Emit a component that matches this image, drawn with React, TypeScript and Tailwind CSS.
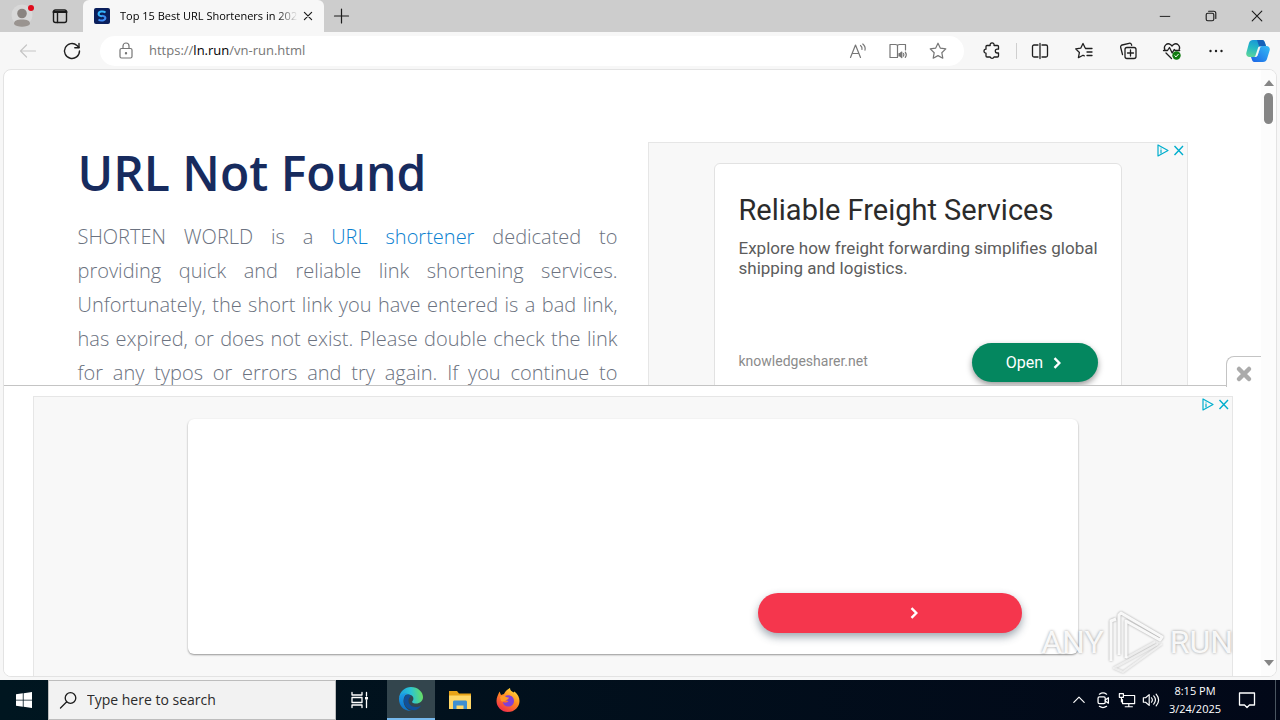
import type { ReactNode } from "react";

type IconProps = { children: ReactNode; size?: string; sw?: number };

function Icon({ children, size = "size-5", sw = 1.2 }: IconProps) {
  return (
    <svg
      viewBox="0 0 20 20"
      className={`${size} shrink-0`}
      fill="none"
      stroke="currentColor"
      strokeWidth={sw}
      strokeLinecap="round"
      strokeLinejoin="round"
      aria-hidden="true"
    >
      {children}
    </svg>
  );
}

function ToolButton({ label, children, width = "w-11" }: { label: string; children: ReactNode; width?: string }) {
  return (
    <button type="button" aria-label={label} className={`flex h-8 shrink-0 items-center justify-center ${width}`}>
      {children}
    </button>
  );
}

function TabStrip() {
  return (
    <header className="flex h-8 shrink-0 items-stretch bg-[#cdcdcd] text-[#1b1b1b]">
      <div className="flex w-[83px] shrink-0 items-center">
        <button type="button" aria-label="Profile" className="flex w-11 items-center justify-center">
          <svg viewBox="0 0 24 28" className="h-7 w-6" aria-hidden="true">
            <circle cx="12" cy="13" r="10.5" fill="#d8d8d8" />
            <circle cx="12" cy="11.5" r="4.8" fill="#8a8480" />
            <path d="M4 22c0-3.500 3-4.500 8-4.500s8 1 8 4.500c-2 3.500-14 3.500-16 0z" fill="#9a9490" />
            <circle cx="21" cy="6" r="3" fill="#e00b1c" />
          </svg>
        </button>
        <button type="button" aria-label="Tab actions" className="flex w-8 items-center justify-center">
          <Icon sw={1.4}>
            <rect x="3.5" y="4" width="13" height="12.5" rx="2" />
            <path d="M3.5 6h13" strokeWidth="2" />
            <path d="M7.5 6.5v10" />
          </Icon>
        </button>
      </div>
      <div className="flex w-[241px] shrink-0 items-center rounded-t-md bg-[#f7f7f7] pl-[11px] pr-1.5">
        <svg viewBox="0 0 16 16" className="size-4 shrink-0" aria-hidden="true">
          <rect width="16" height="16" rx="2" fill="#0a1f5c" />
          <path d="M11.500 4.500C9 2.500 4.500 3.500 4.600 6.200c.1 1.600 2 1.900 3.400 2.100" fill="none" stroke="#35b6ff" strokeWidth="2" />
          <path d="M4.500 11.500c2.500 2 7 1 6.900-1.700-.1-1.600-2-1.900-3.400-2.100" fill="none" stroke="#3f8df5" strokeWidth="2" />
        </svg>
        <span className="ml-2.5 flex-1 whitespace-nowrap text-[11px] text-black [mask-image:linear-gradient(to_right,black_88%,transparent)]">
          Top 15 Best URL Shorteners in 202
        </span>
        <button type="button" aria-label="Close tab" className="flex w-5 items-center justify-center">
          <Icon size="size-4" sw={1.5}>
            <path d="M5.500 5.500l9 9M14.500 5.500l-9 9" />
          </Icon>
        </button>
      </div>
      <button type="button" aria-label="New tab" className="flex w-[34px] items-center justify-center">
        <Icon sw={1.2}>
          <path d="M3.500 10h14M10.500 3v14" />
        </Icon>
      </button>
      <div className="flex-1" />
      <button type="button" aria-label="Minimize" className="flex w-[46px] items-center justify-center">
        <Icon size="size-4"><path d="M4 10.500h12" /></Icon>
      </button>
      <button type="button" aria-label="Restore" className="flex w-[46px] items-center justify-center">
        <Icon size="size-4" sw={1.4}>
          <rect x="4" y="6.500" width="9.500" height="9.500" rx="2" />
          <path d="M7 4h6.500a2.500 2.500 0 0 1 2.500 2.500V13" />
        </Icon>
      </button>
      <button type="button" aria-label="Close window" className="flex w-[46px] items-center justify-center">
        <Icon size="size-4" sw={1.4}><path d="M4 4l12 12M16 4L4 16" /></Icon>
      </button>
    </header>
  );
}

function Toolbar() {
  return (
    <div className="flex h-[37px] shrink-0 items-center bg-[#f7f7f7] text-[#1f1f1f]">
      <button type="button" aria-label="Back" disabled className="flex w-14 items-center justify-center text-[#c6c6c6]">
        <Icon><path d="M17.500 10h-15M8.500 4l-6 6 6 6" /></Icon>
      </button>
      <button type="button" aria-label="Refresh" className="flex w-8 items-center justify-center">
        <Icon sw={1.4}>
          <path d="M17.500 10a7.500 7.500 0 1 1-2.500-5.600L17 6.500" />
          <path d="M17 2.500v4.200h-4.200" />
        </Icon>
      </button>
      <div className="ml-3 flex h-[30px] min-w-0 flex-1 items-center rounded-full bg-white pl-4 pr-1.5 text-[#767676]">
        <Icon sw={1.2}>
          <rect x="4" y="7.500" width="12" height="9.500" rx="1.500" />
          <path d="M7 7.500V5a3 3 0 0 1 6 0v2.500" />
          <circle cx="10" cy="12.200" r=".6" fill="currentColor" />
        </Icon>
        <div className="ml-[13px] min-w-0 flex-1 whitespace-nowrap text-[13px]" role="textbox" aria-label="Address">
          https://<span className="text-black">ln.run</span>/vn-run.html
        </div>
        <ToolButton label="Read aloud" width="w-10">
          <Icon>
            <path d="M2.500 16.500L7.500 4l5 12.500M4.300 12.500h6.500M12.500 4.500c1.300 1 1.800 2.400 1.500 4M14.800 3c2 1.600 2.700 3.800 2.200 6.200" />
          </Icon>
        </ToolButton>
        <ToolButton label="Immersive reader" width="w-10">
          <Icon>
            <path d="M9.500 4.500v11.500M9.500 16.500H2V3.500h5.500c1.300 0 2 .4 2 1 0-.6.7-1 2-1H17.500V9" />
            <path d="M11 12.500v2.500h1l1.800 1.500v-5.500L12 12.500z" fill="currentColor" />
            <path d="M15.500 12.500c.5.800.5 1.800 0 2.600M17.300 11.200c1.200 1.600 1.200 3.600 0 5.200" />
          </Icon>
        </ToolButton>
        <ToolButton label="Add to favorites" width="w-10">
          <Icon>
            <path d="M10 2.200l2.400 5 5.400.7-4 3.800 1 5.500-4.800-2.600-4.800 2.600 1-5.500-4-3.800 5.400-.7z" />
          </Icon>
        </ToolButton>
      </div>
      <div className="flex shrink-0 items-center pl-1.5 pr-0.5">
        <ToolButton label="Extensions">
          <Icon sw={1.3}>
            <path d="M5 4.500h3.200a2 2 0 1 1 3.800 0h3.500a1 1 0 0 1 1 1v2.700h-1.300a1.900 1.900 0 1 0 0 3.800h1.300V15a1 1 0 0 1-1 1H12a2 2 0 0 1-3.800 0H5a1 1 0 0 1-1-1v-2.800a2 2 0 0 1 0-4V5.500a1 1 0 0 1 1-1z" />
          </Icon>
        </ToolButton>
        <div className="ml-0.5 mr-px h-4 w-px bg-[#cfcfcf]" />
        <ToolButton label="Split screen">
          <Icon sw={1.3}>
            <path d="M8 4H4A1.500 1.500 0 0 0 2.500 5.500v9A1.500 1.500 0 0 0 4 16h4M12 4h4A1.500 1.500 0 0 1 17.500 5.500v9a1.500 1.500 0 0 1-1.500 1.500h-4M10 2.500v15" />
          </Icon>
        </ToolButton>
        <ToolButton label="Favorites">
          <Icon sw={1.3}>
            <path d="M11.500 7.500h6.500M13 11h5M13 14.500h5M11.200 7L9 2.500 6.700 7.200l-5 .7 3.700 3.600-1 5.200L9 14.200l1.300.7" />
          </Icon>
        </ToolButton>
        <ToolButton label="Collections">
          <Icon sw={1.3}>
            <rect x="7" y="6.500" width="11" height="11" rx="2" />
            <path d="M12.500 9v6M9.500 12h6M4.500 13.500l-1.800-7A2 2 0 0 1 4.100 4l7-1.700a2 2 0 0 1 2.400 1.300l.2.700" />
          </Icon>
        </ToolButton>
        <ToolButton label="Browser essentials">
          <Icon sw={1.3}>
            <path d="M2.800 8.500C1.200 5 5 1.300 8.500 3.500L10 5l1.500-1.500C15 1.300 18.800 5 17.200 8.500M1.500 9.500h4l2-3 2.700 5.500 2-3.500 1 1h4.500M4 12l5.500 5.500" />
            <circle cx="14.500" cy="14.500" r="4.200" fill="#0f7b0f" stroke="none" />
            <path d="M12.800 14.700l1.200 1.200 2.300-2.600" stroke="#fff" strokeWidth="1" />
          </Icon>
        </ToolButton>
        <ToolButton label="Settings and more">
          <Icon>
            <g fill="currentColor" stroke="none">
              <circle cx="4.500" cy="10" r="1.200" />
              <circle cx="10" cy="10" r="1.200" />
              <circle cx="15.500" cy="10" r="1.200" />
            </g>
          </Icon>
        </ToolButton>
        <ToolButton label="Copilot" width="w-10">
          <svg viewBox="0 0 24 24" className="size-6" aria-hidden="true">
            <defs>
              <linearGradient id="cpA" x1=".6" y1="0" x2=".3" y2="1">
                <stop offset="0" stopColor="#1794d8" />
                <stop offset=".5" stopColor="#25b9c4" />
                <stop offset="1" stopColor="#5bd49b" />
              </linearGradient>
              <linearGradient id="cpB" x1="0" y1="1" x2="1" y2="0">
                <stop offset="0" stopColor="#1b62e6" />
                <stop offset="1" stopColor="#33bdf5" />
              </linearGradient>
            </defs>
            <path d="M7 1h9c2 0 2.500 1.500 3 3l1 3h-3.500c-1.500 0-2 .7-2.500 2l-2.300 7c-.5 1.300-1.200 2-2.700 2H3.500C1 18-.3 16 .4 13.500L3 4c.6-2 2-3 4-3z" fill="url(#cpA)" />
            <path d="M11 1h5c2 0 2.500 1.500 3 3l1 3h-3.500c-1.500 0-2.500.5-3 1.500z" fill="#1461b8" />
            <path d="M17 23H8.500c-2 0-2.300-1.500-2.800-3L5 18h4c1.500 0 2.200-.7 2.700-2L14 9c.5-1.500 1.200-2 3-2h3.500c2.500 0 3.800 2 3.100 4.500L21 20c-.6 2-2 3-4 3z" fill="url(#cpB)" />
            <path d="M13.500 7.500h1.700c-.6.300-.9.800-1.200 1.500l-2.300 7c-.5 1.300-1.200 2-2.700 2H8.200c.6-.3 1-.9 1.300-1.600l2.400-7.200c.3-1 .8-1.500 1.600-1.700z" fill="#f7f7f7" />
          </svg>
        </ToolButton>
      </div>
    </div>
  );
}

function AdMarks() {
  return (
    <div className="absolute right-0 top-0 flex items-center">
      <button type="button" aria-label="Ad choices" className="flex h-[15px] w-4 items-center justify-center">
        <svg viewBox="0 0 15 15" className="size-[15px]" fill="none" stroke="#00aecd" strokeWidth="1.200" aria-hidden="true">
          <path d="M3 2v11l10-5.500z" strokeLinejoin="round" />
          <path d="M6 6.500v4M6 4.800v.8" />
        </svg>
      </button>
      <button type="button" aria-label="Close ad" className="flex h-[15px] w-4 items-center justify-center">
        <svg viewBox="0 0 15 15" className="size-[15px]" stroke="#00aecd" strokeWidth="1.400" aria-hidden="true">
          <path d="M3.500 3l8.500 9M12 3l-8.500 9" />
        </svg>
      </button>
    </div>
  );
}

function Chevron() {
  return (
    <svg viewBox="0 0 12 12" className="size-3" fill="none" stroke="#fff" strokeWidth="2.400" aria-hidden="true">
      <path d="M3.500 1.200L8.300 6l-4.800 4.800" />
    </svg>
  );
}

function FreightAd() {
  return (
    <aside className="relative flex min-w-0 justify-center border border-[#e6e6e6] bg-[#f8f8f8] px-6 pt-5">
      <AdMarks />
      <div className="flex h-[260px] w-full max-w-[408px] flex-col rounded-md border border-[#e2e2e2] bg-white pl-6 pr-[23px] pt-7 font-[Roboto,sans-serif]">
        <h2 className="whitespace-nowrap text-[29px] leading-9 text-[#2b2b2b]">Reliable Freight Services</h2>
        <p className="mt-2.5 -mr-5 text-[17px] leading-5 text-[#5c5c5c]">
          Explore how freight forwarding simplifies global
          <br />
          shipping and logistics.
        </p>
        <div className="mt-[65px] flex items-start justify-between">
          <span className="pt-2 text-sm text-[#8b8b8b]">knowledgesharer.net</span>
          <button
            type="button"
            className="flex h-[39px] w-[126px] items-center justify-center gap-2 rounded-full bg-[#04875f] text-base text-white shadow-[0_3px_6px_rgba(0,0,0,0.4)]"
          >
            Open
            <Chevron />
          </button>
        </div>
      </div>
    </aside>
  );
}

function Watermark() {
  return (
    <div className="pointer-events-none absolute bottom-0 right-7 flex items-center gap-1 font-[Roboto,sans-serif] text-[32px] leading-[68px] text-white/90 [text-shadow:0_0_3px_rgba(0,0,0,0.4)]">
      <span>ANY</span>
      <svg
        viewBox="0 0 58 62"
        className="h-[62px] w-[58px] drop-shadow-[0_0_1px_rgba(0,0,0,0.4)]"
        fill="none"
        stroke="#fff"
        strokeOpacity=".9"
        strokeWidth="3"
        strokeLinejoin="round"
        aria-hidden="true"
      >
        <path d="M3 50V10l5-2" />
        <path d="M11 44V4l2-2 41 24-2 3-34-19v37" />
        <path d="M50 33L6 57l9 4 39-28M47 31L18 47" strokeOpacity=".6" strokeWidth="2" />
      </svg>
      <span>RUN</span>
    </div>
  );
}

function BottomAd() {
  return (
    <section aria-label="Advertisement" className="relative h-[291px] shrink-0 border-t border-[#c4c4c4] bg-white pt-2.5">
      <button
        type="button"
        aria-label="Hide advertisement"
        className="absolute -top-[30px] right-0 flex h-[31px] w-[35px] items-center justify-center rounded-tl-lg border-l border-t border-[#c4c4c4] bg-white pt-1"
      >
        <svg viewBox="0 0 18 18" className="size-[18px]" stroke="#ababab" strokeWidth="4.500" aria-hidden="true">
          <path d="M4 4l10 10M14 4L4 14" strokeLinecap="round" />
        </svg>
      </button>
      <div className="relative mx-auto flex h-full max-w-[1200px] justify-center overflow-hidden border border-b-0 border-[#e6e6e6] bg-[#f8f8f8] px-6 pt-[22px]">
        <AdMarks />
        <div className="flex h-[235px] w-full max-w-[890px] items-end justify-end rounded-md bg-white pb-[21px] pr-14 shadow-[0_1px_2px_rgba(0,0,0,0.4)]">
          <button
            type="button"
            aria-label="Open"
            className="flex h-10 w-[264px] items-center justify-center rounded-full bg-[#f5364d] pl-12 shadow-[0_4px_8px_rgba(40,60,80,0.45)]"
          >
            <Chevron />
          </button>
        </div>
      </div>
      <Watermark />
    </section>
  );
}

function Scrollbar() {
  return (
    <div className="flex w-[15px] shrink-0 flex-col items-center bg-[#fcfcfc] py-2.5" aria-hidden="true">
      <svg viewBox="0 0 10 6" className="h-1.5 w-2.5"><path d="M5 0l5 6H0z" fill="#858585" /></svg>
      <div className="mt-[7px] h-[31px] w-[9px] rounded-full bg-[#858585]" />
      <div className="flex-1" />
      <svg viewBox="0 0 10 6" className="h-1.5 w-2.5"><path d="M5 6l5-6H0z" fill="#858585" /></svg>
    </div>
  );
}

function Taskbar() {
  return (
    <footer className="flex h-10 shrink-0 items-stretch bg-linear-to-r from-[#001620] to-[#020818] text-white">
      <button type="button" aria-label="Start" className="flex w-12 items-center justify-center">
        <svg viewBox="0 0 16 16" className="size-4" fill="#fff" aria-hidden="true">
          <path d="M0 2.300l6.800-1v6.400H0zM7.600 1.200L16 0v7.700H7.600zM0 8.400h6.800v6.400l-6.800-1zM7.600 8.400H16V16l-8.400-1.200z" />
        </svg>
      </button>
      <label className="flex w-72 items-center gap-2 border border-[#bdbdbd] bg-[#f2f2f2] pl-2.5 text-[#1b1b1b]">
        <Icon sw={1.3}>
          <circle cx="11.5" cy="8" r="5.300" />
          <path d="M7.500 12l-6 6" />
        </Icon>
        <input
          type="text"
          aria-label="Search"
          placeholder="Type here to search"
          className="min-w-0 flex-1 bg-transparent text-sm placeholder:text-[#2b2b2b]"
        />
      </label>
      <button type="button" aria-label="Task view" className="flex w-12 items-center justify-center">
        <Icon sw={1.3}>
          <path d="M2 2.500V5h10V2.500M2 17.500V15h10v2.500M2 7.500h10v5H2zM16.500 2.500V6M16.500 10v7.500" />
          <path d="M16.500 7v2.500" strokeWidth="3" strokeLinecap="butt" />
        </Icon>
      </button>
      <button
        type="button"
        aria-label="Microsoft Edge"
        className="ml-[3px] flex w-12 items-center justify-center border-b-2 border-[#76b9ed] bg-[#33454d]"
      >
        <svg viewBox="0 0 24 24" className="size-6" aria-hidden="true">
          <defs>
            <linearGradient id="edA" x1="0" y1=".4" x2="1" y2=".3">
              <stop offset="0" stopColor="#1c9fe0" />
              <stop offset=".5" stopColor="#2bc4d4" />
              <stop offset="1" stopColor="#6be05c" />
            </linearGradient>
            <linearGradient id="edB" x1="0" y1="0" x2="0" y2="1">
              <stop offset="0" stopColor="#1b9de8" />
              <stop offset="1" stopColor="#0f6fc5" />
            </linearGradient>
          </defs>
          <path d="M0 11C1 4 6 0 12 0c7 0 12 5 12 10 0 4-3 6.500-7 6.500-3.500 0-4.500-1.500-3.500-2.500 2-2 1-6.500-4.500-6.500C4.500 7.500 1 9 0 11z" fill="url(#edA)" />
          <path d="M0 12c0-4 4-6.500 9-5.500-3 1-4.500 4-4.500 7.500 0 5 4 9.500 8.500 10C5 24.500 0 19 0 12z" fill="url(#edB)" />
          <path d="M9 7.500c-3 1-4.500 4-4 7.500 1 5.500 6 9 12 8 2-.8 4-2.600 5-4.500-6 3.500-13 .5-12.500-5.500.2-2 1.200-3 2.500-3.500C11.500 8 10.500 7.300 9 7.500z" fill="#115099" />
        </svg>
      </button>
      <button type="button" aria-label="File Explorer" className="flex w-12 items-center justify-center pl-px">
        <svg viewBox="0 0 22 20" className="h-5 w-[22px]" aria-hidden="true">
          <path d="M0 1h8l2 2.500h12V19H0z" fill="#e8a317" />
          <path d="M0 5.500h22V19H0z" fill="#ffd767" />
          <path d="M4 19v-7c0-1 .7-1.500 1.500-1.500h11c.8 0 1.500.5 1.500 1.500v7h-3.500v-3.500h-7V19z" fill="#3d8fd0" />
        </svg>
      </button>
      <button type="button" aria-label="Firefox" className="flex w-[50px] items-center justify-center">
        <svg viewBox="0 0 24 24" className="size-6" aria-hidden="true">
          <defs>
            <linearGradient id="ffA" x1=".8" y1="0" x2=".2" y2="1">
              <stop offset="0" stopColor="#ffe23f" />
              <stop offset=".45" stopColor="#ff8a20" />
              <stop offset="1" stopColor="#f0234f" />
            </linearGradient>
          </defs>
          <path d="M3.500 3.500L5 7l3-1c1.500-3 3-4.500 6-6 0 2.500 1.500 3 3.500 4.500l1-1C22 6.500 23.500 9.500 23.500 13c0 6-5 11-11.500 11S.5 19 .5 13c0-3.500 1.500-6 3-9.500z" fill="url(#ffA)" />
          <path d="M9 8c4-2 9 0 9 5 0 3.500-2.700 5.500-5.700 5.500S7 16.500 7 14c2 1.500 4.500.5 5.500-1C10 13 8 11.500 9 8z" fill="#8040d8" />
          <path d="M4 9c2-1.500 4-1.500 5.500-.5 1 .6 2 1 3.500 1-.5 2-2.500 2-3.500 3S7 14 5 13z" fill="#ff9a26" />
        </svg>
      </button>
      <div className="flex-1" />
      <button type="button" aria-label="Show hidden icons" className="flex w-6 items-center justify-center">
        <Icon size="size-4" sw={1.5}><path d="M3.500 13L10 6.500l6.500 6.500" /></Icon>
      </button>
      <button type="button" aria-label="Meet now" className="flex w-6 items-center justify-center">
        <Icon size="size-[18px]" sw={1.4}>
          <rect x="4.500" y="6.500" width="8" height="7.500" rx="1.500" />
          <path d="M12.500 10l3.500-2.500v6l-3.500-2.500M6 3.500c2.500-1.800 5.500-1.800 8 0M6 17c2.500 1.800 5.500 1.800 8 0" />
        </Icon>
      </button>
      <button type="button" aria-label="Network" className="flex w-6 items-center justify-center">
        <Icon size="size-[18px]" sw={1.3}>
          <path d="M7 5h11.500v9H5V9.500M12 14v3.500M8 17.500h8M1.500 3h4.500v4H1.500zM3.800 7v5" />
        </Icon>
      </button>
      <button type="button" aria-label="Volume" className="flex w-6 items-center justify-center">
        <Icon size="size-[18px]" sw={1.3}>
          <path d="M1.500 7.500v5H4l4 3.500V4L4 7.500zM10.500 7.500c1.200 1.500 1.200 3.500 0 5M13 5.500c2.300 2.700 2.300 6.300 0 9M15.700 3.500c3.400 4 3.400 9 0 13" />
        </Icon>
      </button>
      <div className="flex w-16 flex-col items-center justify-center whitespace-nowrap text-[11px] leading-[18px]">
        <span>8:15 PM</span>
        <span>3/24/2025</span>
      </div>
      <button type="button" aria-label="Notifications" className="flex w-10 items-center justify-center">
        <Icon sw={1.3}><path d="M2.500 3h15v12h-5L10 17.500 7.500 15h-5z" /></Icon>
      </button>
      <div className="ml-2 mr-1 w-px bg-[#4a5560]" />
    </footer>
  );
}

export default function App() {
  return (
    <div className="flex h-screen flex-col overflow-hidden bg-[#f7f7f7] font-['Open_Sans',sans-serif]">
      <TabStrip />
      <Toolbar />
      <div className="mx-[3px] mb-[3px] flex min-h-0 flex-1 overflow-hidden rounded-lg border border-[#e3e3e3] bg-white">
        <div className="flex min-w-0 flex-1 flex-col">
          <main className="min-h-0 flex-1 overflow-hidden">
            <div className="mx-auto grid max-w-[1140px] grid-cols-2 gap-[30px] px-[15px] pt-[72px]">
              <article className="min-w-0">
                <h1 className="text-5xl font-semibold leading-[62px] text-[#172b5e]">URL Not Found</h1>
                <p className="mt-4 text-justify text-xl font-light leading-[34px] text-[#6b7280] [text-align-last:justify]">
                  SHORTEN WORLD is a{" "}
                  <a href="#shortener" className="text-[#0a7fd0]">
                    URL shortener
                  </a>{" "}
                  dedicated to providing quick and reliable link shortening services. Unfortunately, the short link you
                  have entered is a bad link, has expired, or does not exist. Please double check the link for any typos
                  or errors and try again. If you continue to
                </p>
              </article>
              <FreightAd />
            </div>
          </main>
          <BottomAd />
        </div>
        <Scrollbar />
      </div>
      <Taskbar />
    </div>
  );
}
